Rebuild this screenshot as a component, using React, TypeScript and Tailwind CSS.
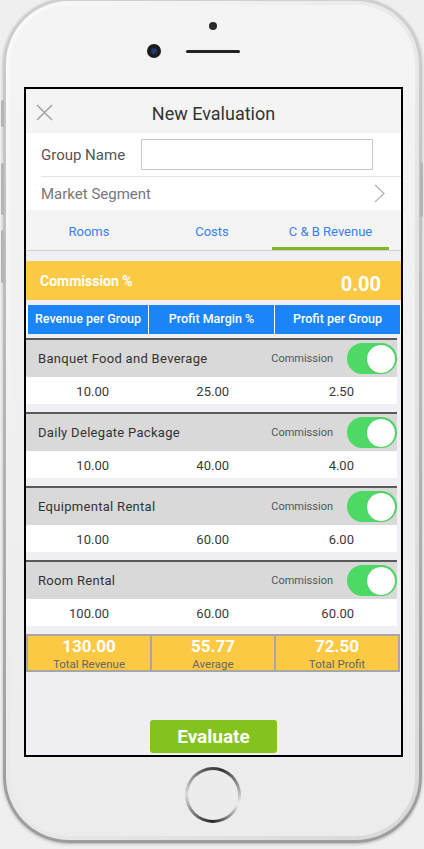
const ITEMS = [
  { name: 'Banquet Food and Beverage', revenue: '10.00', margin: '25.00', profit: '2.50' },
  { name: 'Daily Delegate Package', revenue: '10.00', margin: '40.00', profit: '4.00' },
  { name: 'Equipmental Rental', revenue: '10.00', margin: '60.00', profit: '6.00' },
  { name: 'Room Rental', revenue: '100.00', margin: '60.00', profit: '60.00' },
];

const TOTALS = [
  { value: '130.00', label: 'Total Revenue' },
  { value: '55.77', label: 'Average' },
  { value: '72.50', label: 'Total Profit' },
];

function Toggle() {
  return (
    <div className="w-[50px] h-[31px] rounded-full bg-[#4cd964] flex items-center justify-end pr-[2px]">
      <div className="w-[28px] h-[28px] rounded-full bg-white shadow-[0_0_1px_rgba(0,0,0,0.3)]" />
    </div>
  );
}

export default function App() {
  return (
    <div className="w-[424px] h-[849px] bg-[#efefef] relative overflow-hidden font-['Roboto',sans-serif]">
      {/* side buttons */}
      <div className="absolute left-[1px] top-[100px] w-[3px] h-[27px] rounded-sm bg-[#b5b5b5]" />
      <div className="absolute left-[1px] top-[163px] w-[3px] h-[52px] rounded-sm bg-[#b5b5b5]" />
      <div className="absolute left-[1px] top-[230px] w-[3px] h-[53px] rounded-sm bg-[#b5b5b5]" />
      <div className="absolute right-[1px] top-[162px] w-[3px] h-[55px] rounded-sm bg-[#b5b5b5]" />

      <div className="ml-[3px] mt-[-2px] w-[419px] h-[845px] rounded-[66px] bg-gradient-to-b from-[#cfcfcf] to-[#9c9c9c] p-[3px] shadow-[0_1px_3px_rgba(0,0,0,0.25)]">
        <div className="h-full rounded-[63px] bg-gradient-to-br from-[#fafafa] to-[#d8d8d8] p-[4px]">
          <div className="h-full rounded-[59px] bg-gradient-to-b from-[#f4f4f4] to-[#ececec] flex flex-col">
            {/* top: sensor, camera, speaker */}
            <div className="h-[82px] flex flex-col">
              <div className="mt-[17px] self-center w-[8px] h-[8px] rounded-full bg-[#2a2a2a]" />
              <div className="mt-[14px] h-[14px] flex items-center ml-[137px]">
                <div className="w-[14px] h-[14px] rounded-full bg-[#1c1c1c] flex items-center justify-center">
                  <div className="w-[6px] h-[6px] rounded-full bg-[#1f3a73]" />
                </div>
                <div className="ml-[25px] w-[54px] h-[3px] rounded-full bg-[#222]" />
              </div>
            </div>

            {/* screen */}
            <div className="ml-[14px] w-[379px] h-[670px] border-2 border-black bg-[#efeff4] flex flex-col overflow-hidden">
              <div className="h-[44px] bg-[#f4f4f4] relative flex items-center justify-center pt-[4px]">
                <svg width="17" height="17" viewBox="0 0 17 17" className="absolute left-[10px] top-[15px]">
                  <path d="M1 1 L16 16 M16 1 L1 16" stroke="#a2a2a2" strokeWidth="1.5" fill="none" />
                </svg>
                <span className="text-[18px] text-[#333]">New Evaluation</span>
              </div>

              <div className="bg-white">
                <div className="ml-[15px] h-[44px] border-b border-[#e2e2e2] flex items-center">
                  <span className="w-[100px] text-[15px] text-[#555] pt-[1px]">Group Name</span>
                  <div className="w-[232px] h-[31px] border border-[#c8c8c8] bg-white" />
                </div>
                <div className="h-[33px] flex items-center justify-between pl-[15px] pr-[16px]">
                  <span className="text-[15px] text-[#777] pt-[1px]">Market Segment</span>
                  <svg width="11" height="19" viewBox="0 0 11 19">
                    <path d="M1 1 L10 9.5 L1 18" stroke="#a9b6c6" strokeWidth="1.3" fill="none" />
                  </svg>
                </div>
              </div>

              <div className="h-[41px] bg-[#f4f4f4] border-b border-[#d2d2d2] flex text-[13px] text-[#3a7ff0]">
                <div className="w-[126px] flex items-center justify-center pt-[4px]">Rooms</div>
                <div className="w-[120px] flex items-center justify-center pt-[4px]">Costs</div>
                <div className="w-[117px] relative flex items-center justify-center pt-[4px]">
                  C &amp; B Revenue
                  <div className="absolute left-0 right-0 bottom-0 h-[3px] bg-[#7cb82a]" />
                </div>
              </div>

              <div className="pt-[10px]">
                <div className="h-[39px] bg-[#fcc944] flex items-center justify-between pl-[14px] pr-[20px] text-white font-bold">
                  <span className="text-[14px] pt-[1px]">Commission %</span>
                  <span className="text-[20px] pt-[6px]">0.00</span>
                </div>

                <div className="mt-[5px] h-[29px] bg-white flex gap-px pl-[2px] pr-[1px] text-white text-[12.5px] font-medium">
                  <div className="w-[120px] bg-[#1b84f7] flex items-center justify-center">Revenue per Group</div>
                  <div className="w-[125px] bg-[#1b84f7] flex items-center justify-center">Profit Margin %</div>
                  <div className="flex-1 bg-[#1b84f7] flex items-center justify-center">Profit per Group</div>
                </div>

                <div className="mt-[4px]">
                  {ITEMS.map(item => (
                    <div key={item.name} className="mr-[4px] mb-[8px] border-t-2 border-[#595959]">
                      <div className="h-[37px] bg-[#d9d9d9] flex items-center pl-[12px]">
                        <span className="flex-1 text-[13px] tracking-[0.3px] text-[#333]">{item.name}</span>
                        <span className="mr-[14px] text-[11px] text-[#555] pt-[2px]">Commission</span>
                        <Toggle />
                      </div>
                      <div className="h-[27px] bg-white flex items-center text-[13px] text-[#3a3a3a] pt-[3px]">
                        <span className="w-[83px] text-right">{item.revenue}</span>
                        <span className="w-[120px] text-right">{item.margin}</span>
                        <span className="w-[125px] text-right">{item.profit}</span>
                      </div>
                    </div>
                  ))}
                </div>

                <div className="mt-[1px] mr-[1px] h-[38px] bg-[#a6a6a6] p-[2px] flex gap-[2px]">
                  {TOTALS.map(t => (
                    <div key={t.label} className="flex-1 bg-[#fcc944] flex flex-col items-center justify-center pt-[3px]">
                      <span className="text-[17px] font-bold text-white leading-[19px]">{t.value}</span>
                      <span className="text-[11.5px] text-[#666] leading-[15px] mt-[1px]">{t.label}</span>
                    </div>
                  ))}
                </div>
              </div>

              <div className="flex-1 flex items-end justify-center pb-[2px]">
                <button className="w-[127px] h-[33px] rounded-[3px] bg-[#84c21e] text-white font-bold text-[19px] pt-[2px]">
                  Evaluate
                </button>
              </div>
            </div>

            {/* home button */}
            <div className="mt-[10px] self-center w-[56px] h-[56px] rounded-full bg-[conic-gradient(from_20deg,#333,#eee_25%,#222_45%,#ddd_70%,#555_90%,#333)] p-[3px]">
              <div className="w-full h-full rounded-full bg-[#ececec]" />
            </div>
          </div>
        </div>
      </div>
    </div>
  );
}
